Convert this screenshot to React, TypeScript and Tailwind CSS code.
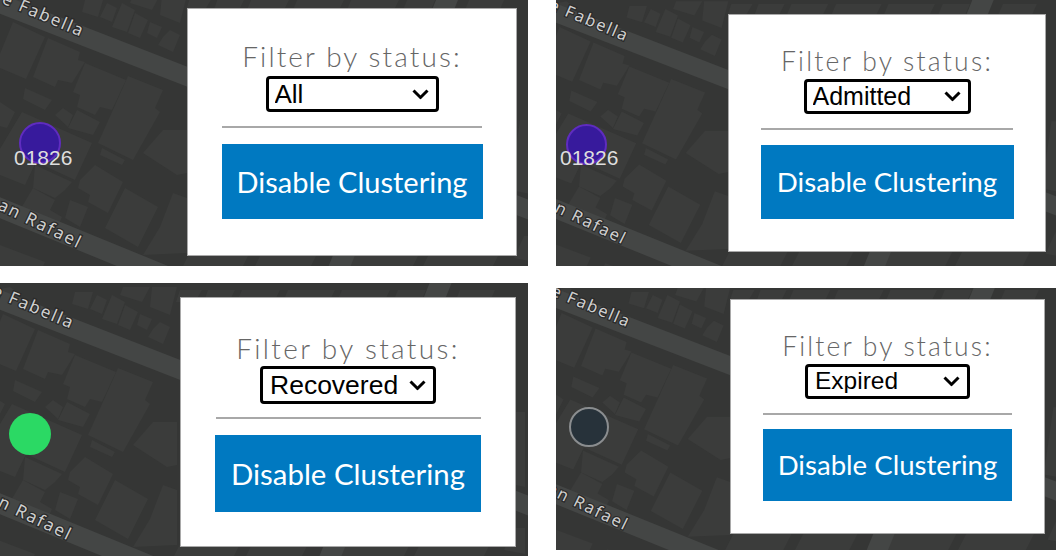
const blocks: string[] = [
  "13,22 45,37 26,79 -5,66",
  "48,38 80,52 78,60 85,62 72,83 58,80 55,87 33,77",
  "25,88 52,100 45,110 23,99",
  "85,63 126,80 112,110 100,107 95,115 77,107 80,95 73,92",
  "128,76 163,90 155,108 160,112 133,160 98,143 112,112",
  "55,115 63,108 73,115 68,127",
  "77,110 100,122 93,135 68,128",
  "107,3 117,8 112,22 100,17",
  "122,3 135,10 127,32 112,27",
  "135,13 148,20 140,38 128,33",
  "150,22 162,27 157,38 147,33",
  "170,30 180,35 173,52 158,45 163,37",
  "85,0 103,0 98,17 82,12",
  "133,-5 160,-5 152,10 130,3",
  "162,-5 187,-5 180,23 160,15",
  "0,102 15,112 7,128 -5,125",
  "22,112 92,143 75,180 36,162 25,185 -5,173 -5,157",
  "35,165 72,182 65,190 55,198 33,188",
  "80,180 95,165 123,182 108,213 88,202 90,195 78,188",
  "102,148 125,160 122,165 100,155",
  "125,188 158,207 138,247 105,228",
  "70,200 88,207 80,227 65,218",
  "33,188 55,200 50,210 62,217 57,228 20,210",
  "143,153 163,130 187,130 187,173 177,175",
  "160,227 173,193 187,198 187,253 143,255",
  "-5,0 20,-5 32,3 5,12",
  "0,245 45,262 35,285 -5,270",
  "60,268 110,285 90,300 50,290",
  "190,-2 212,-2 205,10 186,10",
  "218,-2 245,-2 238,12 213,12",
  "252,-2 290,-2 283,12 246,12",
  "298,-2 345,-2 338,12 292,12",
  "352,-2 400,-2 393,12 346,12",
  "408,-2 436,-2 430,12 402,12",
  "470,-2 505,-2 498,14 464,12",
  "190,252 250,252 240,272 180,272",
  "262,252 318,252 308,272 252,272",
  "350,252 420,252 410,272 340,272",
  "430,252 500,252 490,272 420,272",
  "520,120 535,120 535,195 510,190",
  "524,236 535,236 535,262 514,258",
];

function MapArt({ transform }: { transform: string }) {
  return (
    <svg className="absolute inset-0 h-full w-full" aria-hidden="true">
      <g transform={transform}>
        <rect x="-40" y="-40" width="640" height="400" fill="#353635" />
        {blocks.map((p) => (
          <polygon key={p} points={p} fill="#3b3c3b" />
        ))}
        <polygon points="-20,-14 560,212 560,232 -20,6" fill="#444645" />
        <polygon points="-20,189 300,320 300,341 -20,210" fill="#444645" />
        <polygon points="440,-10 462,-10 345,280 323,280" fill="#444645" />
        <g
          fill="#cfcfcf"
          stroke="#2a2a2a"
          strokeWidth="2.5"
          paintOrder="stroke"
          fontFamily="'Noto Sans', sans-serif"
          fontSize="17"
          letterSpacing="1.9"
        >
          <text transform="translate(1,3) rotate(23)">e Fabella</text>
          <text transform="translate(-3,209) rotate(26)">an Rafael</text>
        </g>
      </g>
    </svg>
  );
}

type PanelProps = {
  map: string;
  mapTransform: string;
  pad: string;
  card: string;
  title: string;
  selectBox: string;
  select: string;
  hr: string;
  button: string;
  value: string;
  marker: string;
  label?: string;
};

function Panel(p: PanelProps) {
  return (
    <div className={`relative flex items-start overflow-hidden ${p.map} ${p.pad}`}>
      <MapArt transform={p.mapTransform} />
      <div className={p.marker} />
      {p.label ? (
        <span
          className={`absolute font-['Liberation_Sans',sans-serif] text-[21px] leading-none text-[#dedede] ${p.label}`}
        >
          01826
        </span>
      ) : null}
      <div className={`relative flex flex-col items-center border border-[#a9a9a9] bg-white ${p.card}`}>
        <label className={`font-['Lato',sans-serif] font-light leading-none text-[#666666] ${p.title}`}>
          Filter by status:
        </label>
        <div className={`relative ${p.selectBox}`}>
          <select
            defaultValue={p.value}
            className={`h-full w-full appearance-none rounded-[4px] border-[3px] border-black bg-white font-['Liberation_Sans',sans-serif] leading-none text-black ${p.select}`}
          >
            {["All", "Admitted", "Recovered", "Expired"].map((o) => (
              <option key={o}>{o}</option>
            ))}
          </select>
          <svg
            className="pointer-events-none absolute right-[10px] top-1/2 h-[11px] w-[17px] -translate-y-1/2"
            viewBox="0 0 17 11"
            fill="none"
            aria-hidden="true"
          >
            <path d="M1.5 2 L8.5 9 L15.5 2" stroke="#000" strokeWidth="3" />
          </svg>
        </div>
        <div className={`h-[2px] bg-[#a8a8a8] ${p.hr}`} />
        <button
          className={`flex items-center justify-center bg-[#0079c1] font-['Lato',sans-serif] leading-none text-white ${p.button}`}
        >
          Disable Clustering
        </button>
      </div>
    </div>
  );
}

export default function App() {
  return (
    <div className="flex h-[556px] w-[1056px] gap-[28px] overflow-hidden bg-white">
      <div className="flex w-[528px] flex-col justify-between">
        <Panel
          map="h-[266px] w-[528px]"
          pad="pl-[187px] pt-[8px]"
          mapTransform="translate(0 0)"
          card="h-[248px] w-[330px] pt-[33px]"
          title="text-[28px] tracking-[2.1px]"
          selectBox="mt-[6px] h-[36px] w-[173px]"
          select="pl-[6px] text-[26px]"
          hr="mt-[14px] w-[260px]"
          button="mt-[16px] h-[75px] w-[261px] text-[29px]"
          value="All"
          marker="absolute left-[19px] top-[122px] h-[42px] w-[42px] rounded-full border-2 border-[#5f2cc0] bg-[#371a9c]"
          label="left-[14px] top-[147px]"
        />
        <Panel
          map="h-[273px] w-[528px]"
          pad="pl-[180px] pt-[14px]"
          mapTransform="translate(-10 9)"
          card="h-[250px] w-[336px] pt-[36px]"
          title="text-[28px] tracking-[2.35px]"
          selectBox="mt-[4px] h-[38px] w-[176px]"
          select="pl-[7px] text-[26.5px]"
          hr="mt-[13px] w-[265px]"
          button="mt-[16px] h-[77px] w-[266px] text-[29.4px]"
          value="Recovered"
          marker="absolute left-[9px] top-[130px] h-[42px] w-[42px] rounded-full bg-[#2bd964]"
        />
      </div>
      <div className="flex w-[500px] flex-col justify-between pb-[6px]">
        <Panel
          map="h-[266px] w-[500px]"
          pad="pl-[172px] pt-[14px]"
          mapTransform="translate(-9 6) scale(0.97 0.96)"
          card="h-[238px] w-[318px] pt-[33px]"
          title="text-[26.5px] tracking-[2.25px]"
          selectBox="mt-[4px] h-[35px] w-[167px]"
          select="pl-[6px] text-[25px]"
          hr="mt-[14px] w-[252px]"
          button="mt-[15px] h-[74px] w-[253px] text-[27.7px]"
          value="Admitted"
          marker="absolute left-[10px] top-[124px] h-[41px] w-[41px] rounded-full border-2 border-[#5f2cc0] bg-[#371a9c]"
          label="left-[4px] top-[147px]"
        />
        <Panel
          map="h-[262px] w-[500px]"
          pad="pl-[174px] pt-[11px]"
          mapTransform="translate(-7 4) scale(0.97 0.96)"
          card="h-[235px] w-[315px] pt-[33px]"
          title="text-[26.5px] tracking-[2.15px]"
          selectBox="mt-[4px] h-[35px] w-[165px]"
          select="pl-[7px] text-[24.5px]"
          hr="mt-[14px] w-[249px]"
          button="mt-[14px] h-[72px] w-[249px] text-[27.6px]"
          value="Expired"
          marker="absolute left-[13px] top-[119px] h-[40px] w-[40px] rounded-full border-2 border-[#8a8d8f] bg-[#27323a]"
        />
      </div>
    </div>
  );
}
